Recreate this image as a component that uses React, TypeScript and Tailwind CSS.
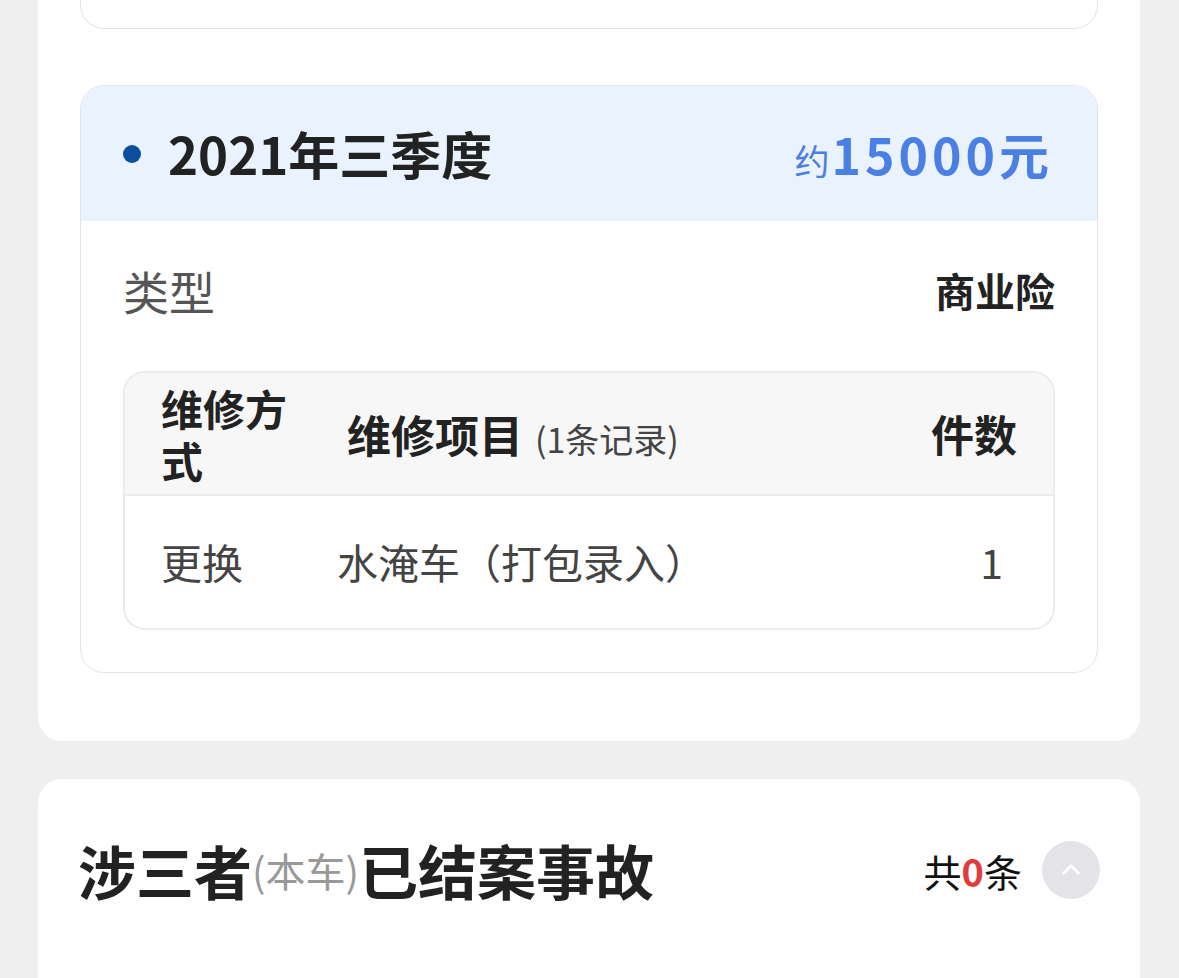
import React from "react";

const font = { fontFamily: '"Noto Sans CJK SC", "Noto Sans", sans-serif' };

function ChevronCircle() {
  return (
    <div className="flex h-[58px] w-[58px] items-center justify-center rounded-full bg-[#e4e4e8]">
      <svg width="26" height="26" viewBox="0 0 24 24" fill="none" stroke="white" strokeWidth={2.6} strokeLinecap="round" strokeLinejoin="round">
        <path d="M5 15l7-7 7 7" />
      </svg>
    </div>
  );
}

function QuarterCard() {
  return (
    <div className="overflow-hidden rounded-[24px] border border-[#e2e6ec] bg-white">
      <div className="flex h-[135px] items-center justify-between bg-[#eaf2fd] pl-[42px] pr-[44px]">
        <div className="flex items-center">
          <span className="h-[18px] w-[18px] rounded-full bg-[#0d4f9c]" />
          <span className="ml-[27px] text-[51px] font-bold text-[#222]">2021年三季度</span>
        </div>
        <div className="flex items-baseline text-[#4a7fe3]">
          <span className="text-[35px]">约</span>
          <span className="ml-[2px] text-[50px] font-bold tracking-[4px]">15000元</span>
        </div>
      </div>

      <div className="px-[42px] pb-[42px]">
        <div className="flex h-[150px] items-center justify-between pb-[12px]">
          <span className="text-[46px] text-[#555]">类型</span>
          <span className="text-[40px] font-bold text-[#222]">商业险</span>
        </div>

        <div className="overflow-hidden rounded-[22px] border-2 border-[#ebebeb]">
          <div className="flex h-[123px] items-center border-b-2 border-[#ebebeb] bg-[#f7f7f7] pl-[36px] pr-[36px] text-[#222]">
            <div className="flex w-[186px] flex-col text-[42px] font-bold leading-[52px]">
              <span>维修方</span>
              <span>式</span>
            </div>
            <div className="flex flex-1 items-baseline">
              <span className="text-[44px] font-bold">维修项目</span>
              <span className="ml-[12px] text-[34px] text-[#444]">(1条记录)</span>
            </div>
            <div className="text-[43px] font-bold">件数</div>
          </div>
          <div className="flex h-[132px] items-center pl-[36px] pr-[50px] text-[41px] text-[#444]">
            <div className="w-[176px]">更换</div>
            <div className="flex-1">水淹车（打包录入）</div>
            <div>1</div>
          </div>
        </div>
      </div>
    </div>
  );
}

export default function App() {
  return (
    <div className="h-[978px] w-[1179px] overflow-hidden bg-[#efefef] pl-[38px] pr-[39px]" style={font}>
      <div className="rounded-b-[24px] bg-white px-[42px] pb-[68px]">
        <div className="h-[29px] rounded-b-[24px] border-x border-b border-[#e5e5e5]" />
        <div className="h-[56px]" />
        <QuarterCard />
      </div>

      <div className="mt-[38px] h-[240px] rounded-t-[24px] bg-white">
        <div className="flex h-[180px] items-center justify-between pl-[40px] pr-[40px] pt-[2px]">
          <div className="flex items-center text-[#222]">
            <span className="text-[58px] font-bold">涉三者</span>
            <span className="text-[40px] text-[#999]">(本车)</span>
            <span className="text-[59px] font-bold">已结案事故</span>
          </div>
          <div className="flex items-center">
            <span className="text-[38px] text-[#111]">
              共<span className="font-bold text-[#e23b3b]">0</span>条
            </span>
            <div className="ml-[20px]">
              <ChevronCircle />
            </div>
          </div>
        </div>
      </div>
    </div>
  );
}
